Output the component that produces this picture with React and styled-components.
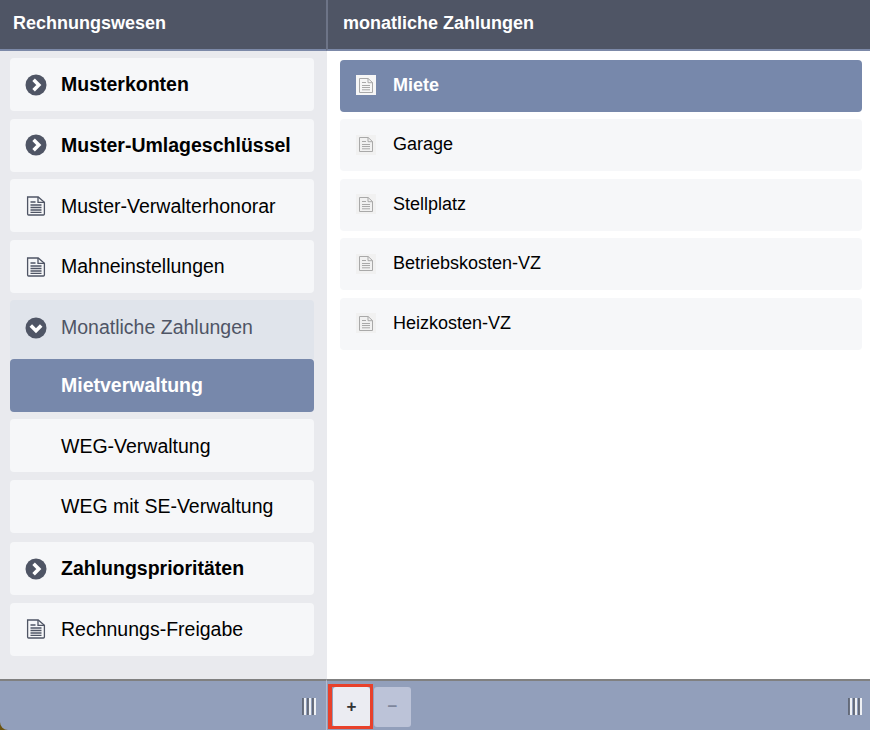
import React from 'react'
import styled, { createGlobalStyle } from 'styled-components'

const GlobalStyle = createGlobalStyle`
  html, body {
    margin: 0;
    padding: 0;
    background: #fff;
  }
  body {
    font-family: "Liberation Sans", Arial, sans-serif;
  }
`

const Page = styled.div`
  width: 870px;
  height: 730px;
  display: grid;
  grid-template-columns: 327px 1fr;
  grid-template-rows: 51px 1fr 51px;
  overflow: hidden;
`

const Header = styled.div`
  display: flex;
  align-items: center;
  box-sizing: border-box;
  height: 51px;
  padding: 0 0 2px ${(p) => (p.$right ? '15px' : '13px')};
  background: #4f5565;
  border-bottom: 2px solid #7c89a8;
  border-left: ${(p) => (p.$right ? '2px solid #6d7487' : 'none')};
  margin-left: ${(p) => (p.$right ? '-1px' : '0')};
  color: #fff;
  font-size: 18px;
  font-weight: 700;
`

const LeftPane = styled.div`
  background: #e9eaee;
  padding: 7px 13px 0 10px;
  display: flex;
  flex-direction: column;
  gap: 7.6px;
`

const RightPane = styled.div`
  background: #fff;
  padding: 9px 8px 0 13px;
  display: flex;
  flex-direction: column;
  gap: 7.45px;
`

const Group = styled.div`
  display: flex;
  flex-direction: column;
  gap: 7.2px;
  margin-bottom: 1.8px;
`

const NavItem = styled.div`
  height: 53px;
  box-sizing: border-box;
  display: flex;
  align-items: center;
  padding: ${(p) => (p.$active ? '0' : '0.8px')} 0 0 ${(p) => (p.$sub ? '51px' : '15px')};
  gap: 14px;
  border-radius: 4px;
  background: ${(p) => (p.$active ? '#7788ab' : '#f6f7f9')};
  color: ${(p) => (p.$active ? '#fff' : '#000')};
  font-size: 19.5px;
  font-weight: ${(p) => (p.$bold || p.$active ? 700 : 400)};
`

const OpenItem = styled(NavItem)`
  height: 58.8px;
  margin-bottom: -7.2px;
  padding-bottom: 5px;
  background: #e0e4eb;
  color: #4f5565;
  border-radius: 4px 4px 0 0;
`

const IconSlot = styled.span`
  width: 22px;
  height: 22px;
  flex: none;
  display: flex;
  align-items: center;
  justify-content: center;
`

const PayItem = styled.div`
  height: 52px;
  box-sizing: border-box;
  display: flex;
  align-items: center;
  padding: 0 0 1.4px 16px;
  gap: 17px;
  border-radius: 4px;
  background: ${(p) => (p.$active ? '#7788ab' : '#f6f7f9')};
  color: ${(p) => (p.$active ? '#fff' : '#000')};
  font-size: 18px;
  font-weight: ${(p) => (p.$active ? 700 : 400)};
`

const DocBox = styled.span`
  width: 20px;
  height: 20px;
  flex: none;
  display: flex;
  align-items: center;
  justify-content: center;
  background: ${(p) => (p.$active ? '#f6f6f6' : '#f1f1f1')};
`

const Footer = styled.div`
  position: relative;
  box-sizing: border-box;
  height: 51px;
  background: #929fbb;
  border-top: 2px solid #808080;
  border-left: ${(p) => (p.$right ? '1px solid #b4bccd' : 'none')};
  margin-left: ${(p) => (p.$right ? '-1px' : '0')};
  display: flex;
  align-items: center;
  padding: 2px ${(p) => (p.$right ? '8px' : '11px')} 0 6px;
  gap: 4px;
  overflow: hidden;
`

const Corner = styled.svg`
  position: absolute;
  left: 0;
  bottom: 0;
`

const ToolButton = styled.div`
  position: relative;
  width: 37px;
  height: 40px;
  border-radius: 3px;
  display: flex;
  align-items: center;
  justify-content: center;
  background: ${(p) => (p.$disabled ? '#bcc3d8' : '#ebecf2')};
  color: ${(p) => (p.$disabled ? '#7e869c' : '#333')};
  font-size: 17px;
  font-weight: 700;
  line-height: 1;
`

// red marker drawn over the add button
const Marker = styled.span`
  position: absolute;
  left: -5px;
  top: -3px;
  right: -3px;
  bottom: -2px;
  border: solid #e8412b;
  border-width: 3px 3px 3px 4px;
`

const Grip = styled.div`
  margin-left: auto;
  display: flex;
  gap: 1px;
`

const GripBar = styled.span`
  width: 4px;
  height: 17px;
  background: linear-gradient(to right, #5f6675 0, #6f7686 50%, #eef0f4 50%, #eef0f4 100%);
`

const ChevronCircle = ({ down }) => (
  <svg width="22" height="22" viewBox="0 0 22 22">
    <circle cx="11" cy="11" r="10.5" fill="#4f5565" />
    <path
      d={down ? 'M5.8 8.6l5.2 5.2 5.2-5.2' : 'M8.6 5.8l5.2 5.2-5.2 5.2'}
      fill="none"
      stroke="#fff"
      strokeWidth="3.6"
    />
  </svg>
)

const DocIcon = () => (
  <svg width="20" height="20" viewBox="0 0 20 20" fill="none" stroke="#4f5565" strokeWidth="1.3">
    <path d="M1.6 1h10.6l6.2 5.2V18a1 1 0 0 1-1 1H2.6a1 1 0 0 1-1-1z" />
    <path d="M12 1v5.4h6.4" />
    <path d="M4.5 6h5M4.5 9h11M4.5 11.5h11M4.5 14h11M4.5 16.4h11" />
  </svg>
)

const SmallDocIcon = () => (
  <svg width="14" height="15" viewBox="0 0 14 15" fill="none" stroke="#a9a9a9" strokeWidth="1">
    <path d="M.5.5h8.6l4.4 4v10H.5z" />
    <path d="M9 .5v4.2h4.5" />
    <path d="M3 4.5h4M3 7.5h8M3 9.5h8M3 11.8h8" />
  </svg>
)

const navItems = [
  { label: 'Musterkonten', icon: 'chevron', bold: true },
  { label: 'Muster-Umlageschlüssel', icon: 'chevron', bold: true },
  { label: 'Muster-Verwalterhonorar', icon: 'doc' },
  { label: 'Mahneinstellungen', icon: 'doc' },
]

const payments = ['Miete', 'Garage', 'Stellplatz', 'Betriebskosten-VZ', 'Heizkosten-VZ']

const renderNav = (item) => (
  <NavItem key={item.label} $bold={item.bold}>
    <IconSlot>{item.icon === 'chevron' ? <ChevronCircle /> : <DocIcon />}</IconSlot>
    {item.label}
  </NavItem>
)

const GripIcon = () => (
  <Grip>
    <GripBar />
    <GripBar />
    <GripBar />
  </Grip>
)

const App = () => {
  return (
    <Page>
      <GlobalStyle />
      <Header>Rechnungswesen</Header>
      <Header $right>monatliche Zahlungen</Header>

      <LeftPane>
        {navItems.map(renderNav)}
        <Group>
          <OpenItem>
            <IconSlot><ChevronCircle down /></IconSlot>
            Monatliche Zahlungen
          </OpenItem>
          <NavItem $sub $active>Mietverwaltung</NavItem>
          <NavItem $sub>WEG-Verwaltung</NavItem>
          <NavItem $sub>WEG mit SE-Verwaltung</NavItem>
        </Group>
        {renderNav({ label: 'Zahlungsprioritäten', icon: 'chevron', bold: true })}
        {renderNav({ label: 'Rechnungs-Freigabe', icon: 'doc' })}
      </LeftPane>

      <RightPane>
        {payments.map((name, i) => (
          <PayItem key={name} $active={i === 0}>
            <DocBox $active={i === 0}>
              <SmallDocIcon />
            </DocBox>
            {name}
          </PayItem>
        ))}
      </RightPane>

      <Footer>
        <Corner width="8" height="8" viewBox="0 0 8 8">
          <path d="M0 0a8 8 0 0 0 8 8H0z" fill="#6b5310" />
        </Corner>
        <GripIcon />
      </Footer>
      <Footer $right>
        <ToolButton>+<Marker /></ToolButton>
        <ToolButton $disabled>−</ToolButton>
        <GripIcon />
      </Footer>
    </Page>
  )
}

export default App
